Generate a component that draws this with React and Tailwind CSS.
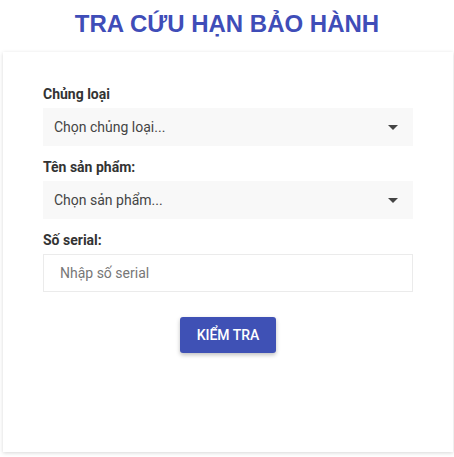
import { useState } from 'react';

function Caret() {
    return (
        <svg width="10" height="5" viewBox="0 0 10 5" className="shrink-0">
            <path d="M0 0h10L5 5z" fill="#444" />
        </svg>
    );
}

function SelectBox({ placeholder }) {
    return (
        <div className="flex h-[38px] items-center justify-between bg-[#f8f8f8] pl-[11px] pr-[15px] text-[14px] text-[#444]">
            <span>{placeholder}</span>
            <Caret />
        </div>
    );
}

function Label({ children, className = '' }) {
    return (
        <label className={`block text-[14px] leading-[20px] font-bold text-[#333] ${className}`}>
            {children}
        </label>
    );
}

export default function App() {
    const [serial, setSerial] = useState('');

    return (
        <div className="min-h-[457px] bg-white font-['Roboto',sans-serif]">
            {/* Title */}
            <h1 className="pt-[9px] text-center font-['Liberation_Sans',Arial,sans-serif] text-[24px] leading-[30px] font-bold text-[#3f4db8]">
                TRA CỨU HẠN BẢO HÀNH
            </h1>

            {/* Card */}
            <div className="mx-[3px] mt-[13px] h-[400px] w-[450px] bg-white px-[40px] pt-[32px] shadow-[0_1px_4px_rgba(0,0,0,0.16)]">
                <Label>Chủng loại</Label>
                <div className="mt-[4px]">
                    <SelectBox placeholder="Chọn chủng loại..." />
                </div>

                <Label className="mt-[11px]">Tên sản phẩm:</Label>
                <div className="mt-[4px]">
                    <SelectBox placeholder="Chọn sản phẩm..." />
                </div>

                <Label className="mt-[11px]">Số serial:</Label>
                <input
                    value={serial}
                    onChange={(e) => setSerial(e.target.value)}
                    placeholder="Nhập số serial"
                    className="mt-[4px] block h-[38px] w-full border border-[#ebebeb] bg-white px-[16px] text-[14px] text-[#333] outline-none placeholder:text-[#777]"
                />

                <div className="mt-[25px] flex justify-center">
                    <button className="h-[36px] w-[96px] rounded-[3px] bg-[#3f51b5] text-[14px] font-medium text-white shadow-[0_2px_4px_rgba(0,0,0,0.25)]">
                        KIỂM TRA
                    </button>
                </div>
            </div>
        </div>
    );
}
